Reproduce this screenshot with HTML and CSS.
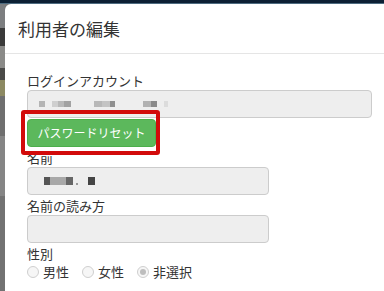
FILE: index.html
```html
<!DOCTYPE html>
<html lang="ja">
<head>
    <meta charset="UTF-8">
    <meta name="viewport" content="width=device-width, initial-scale=1.0">
    <title>利用者の編集</title>
    <link rel="stylesheet" href="styles.css">
</head>
<body>
    <div class="topbar"></div>
    <div class="screen">
        <div class="backdrop">
            <div class="bd bd-1"></div>
            <div class="bd bd-2"></div>
            <div class="bd bd-3"></div>
            <div class="bd bd-4"></div>
            <div class="bd bd-5"></div>
            <div class="bd bd-6"></div>
            <div class="bd bd-7"></div>
            <div class="bd bd-8"></div>
        </div>
        <div class="modal">
            <div class="modal-header">
                <h4 class="modal-title">利用者の編集</h4>
            </div>
            <div class="modal-body">
                <label class="field-label">ログインアカウント</label>
                <div class="input input-wide">
                    <span class="blur" style="width:6px;background:#b4b4b4"></span>
                    <span class="blur gap" style="width:6px;background:#cfcfcf"></span>
                    <span class="blur" style="width:6px;background:#b9b9b9"></span>
                    <span class="blur" style="width:7px;background:#a2a2a2"></span>
                    <span class="blur gap-lg" style="width:8px;background:#b8b8b8"></span>
                    <span class="blur" style="width:8px;background:#c4c4c4"></span>
                    <span class="blur" style="width:5px;background:#8f8f8f"></span>
                    <span class="blur gap-xl" style="width:8px;background:#b2b2b2"></span>
                    <span class="blur" style="width:6px;background:#8a8a8a"></span>
                    <span class="blur gap" style="width:4px;background:#dcdcdc"></span>
                </div>
                <div class="reset-wrap">
                    <button class="btn-reset">パスワードリセット</button>
                </div>
                <label class="field-label">名前</label>
                <div class="input input-mid">
                    <span class="blur blur-dark" style="width:6px;background:#555"></span>
                    <span class="blur blur-dark" style="width:16px;background:#a8a8a8"></span>
                    <span class="blur blur-dark" style="width:7px;background:#666"></span>
                    <span class="blur blur-dot"></span>
                    <span class="blur blur-dark gap" style="width:7px;background:#444"></span>
                </div>
                <label class="field-label">名前の読み方</label>
                <div class="input input-mid"></div>
                <label class="field-label">性別</label>
                <div class="radios">
                    <span class="radio-item"><span class="radio"></span>男性</span>
                    <span class="radio-item"><span class="radio"></span>女性</span>
                    <span class="radio-item"><span class="radio checked"></span>非選択</span>
                </div>
            </div>
        </div>
    </div>
</body>
</html>
```

FILE: styles.css
```css
body {
    margin: 0;
    overflow: hidden;
    background-color: #7a7a7a;
    font-family: "Noto Sans CJK JP", "Noto Sans", sans-serif;
    color: #333;
}
.topbar {
    height: 4px;
    background-color: #0c2034;
    border-bottom: 1px solid #4d6b80;
    box-sizing: border-box;
}
.screen {
    display: flex;
    height: 287px;
}
.backdrop {
    width: 5px;
    flex: none;
    display: flex;
    flex-direction: column;
}
.bd {
    flex: none;
}
.bd-1 { height: 24px; background-color: #7c7e80; }
.bd-2 { height: 18px; background-color: #3a3a3a; }
.bd-3 { height: 22px; background-color: #8a8a88; }
.bd-4 { height: 12px; background-color: #4a4a48; }
.bd-5 { height: 16px; background-color: #8c8962; }
.bd-6 { height: 40px; background-color: #6f6f6f; }
.bd-7 { height: 60px; background-color: #858585; }
.bd-8 { height: 95px; background-color: #727272; }
.modal {
    width: 389px;
    flex: none;
    background-color: #fff;
    border-radius: 6px 0 0 0;
}
.modal-header {
    padding: 14px 13px;
    border-bottom: 1px solid #e5e5e5;
}
.modal-title {
    margin: 0;
    font-size: 17px;
    line-height: 21px;
    font-weight: normal;
    color: #333;
}
.modal-body {
    padding: 18px 22px 0 22px;
}
.field-label {
    display: block;
    font-size: 13px;
    line-height: 18px;
    margin-top: 2px;
    color: #333;
}
.modal-body .field-label:first-child {
    margin-top: 0;
}
.input {
    box-sizing: border-box;
    height: 28px;
    background-color: #eee;
    border: 1px solid #ccc;
    border-radius: 4px;
    display: flex;
    align-items: center;
    padding-left: 11px;
}
.input-wide {
    width: 345px;
}
.input-mid {
    width: 242px;
    padding-left: 16px;
}
.blur {
    display: inline-block;
    height: 6px;
    flex: none;
}
.blur-dark {
    height: 8px;
}
.blur-dot {
    width: 2px;
    height: 2px;
    margin: 5px 3px 0;
    align-self: center;
    background: #999;
}
.gap { margin-left: 7px; }
.gap-lg { margin-left: 23px; }
.gap-xl { margin-left: 28px; }
.reset-wrap {
    position: relative;
    display: inline-block;
    margin-top: 1px;
    vertical-align: top;
}
.reset-wrap::after {
    content: "";
    position: absolute;
    top: -9px;
    left: -6px;
    right: -4px;
    bottom: -8px;
    border: 4px solid #d20a0a;
    border-radius: 3px;
}
.btn-reset {
    display: block;
    box-sizing: border-box;
    height: 28px;
    width: 129px;
    padding: 0;
    background-color: #5cb85c;
    border: 1px solid #4cae4c;
    border-radius: 4px;
    color: #fff;
    font-family: inherit;
    font-size: 12px;
    line-height: 26px;
}
.radios {
    display: flex;
    align-items: center;
    height: 18px;
    font-size: 13px;
    line-height: 18px;
}
.radio-item {
    display: flex;
    align-items: center;
    gap: 4px;
    margin-right: 13px;
}
.radio {
    box-sizing: border-box;
    width: 12px;
    height: 12px;
    border: 1px solid #cfcfcf;
    border-radius: 50%;
    background-color: #f6f6f6;
    position: relative;
}
.radio.checked::after {
    content: "";
    position: absolute;
    top: 2px;
    left: 2px;
    width: 6px;
    height: 6px;
    border-radius: 50%;
    background-color: #bdbdbd;
}
```
